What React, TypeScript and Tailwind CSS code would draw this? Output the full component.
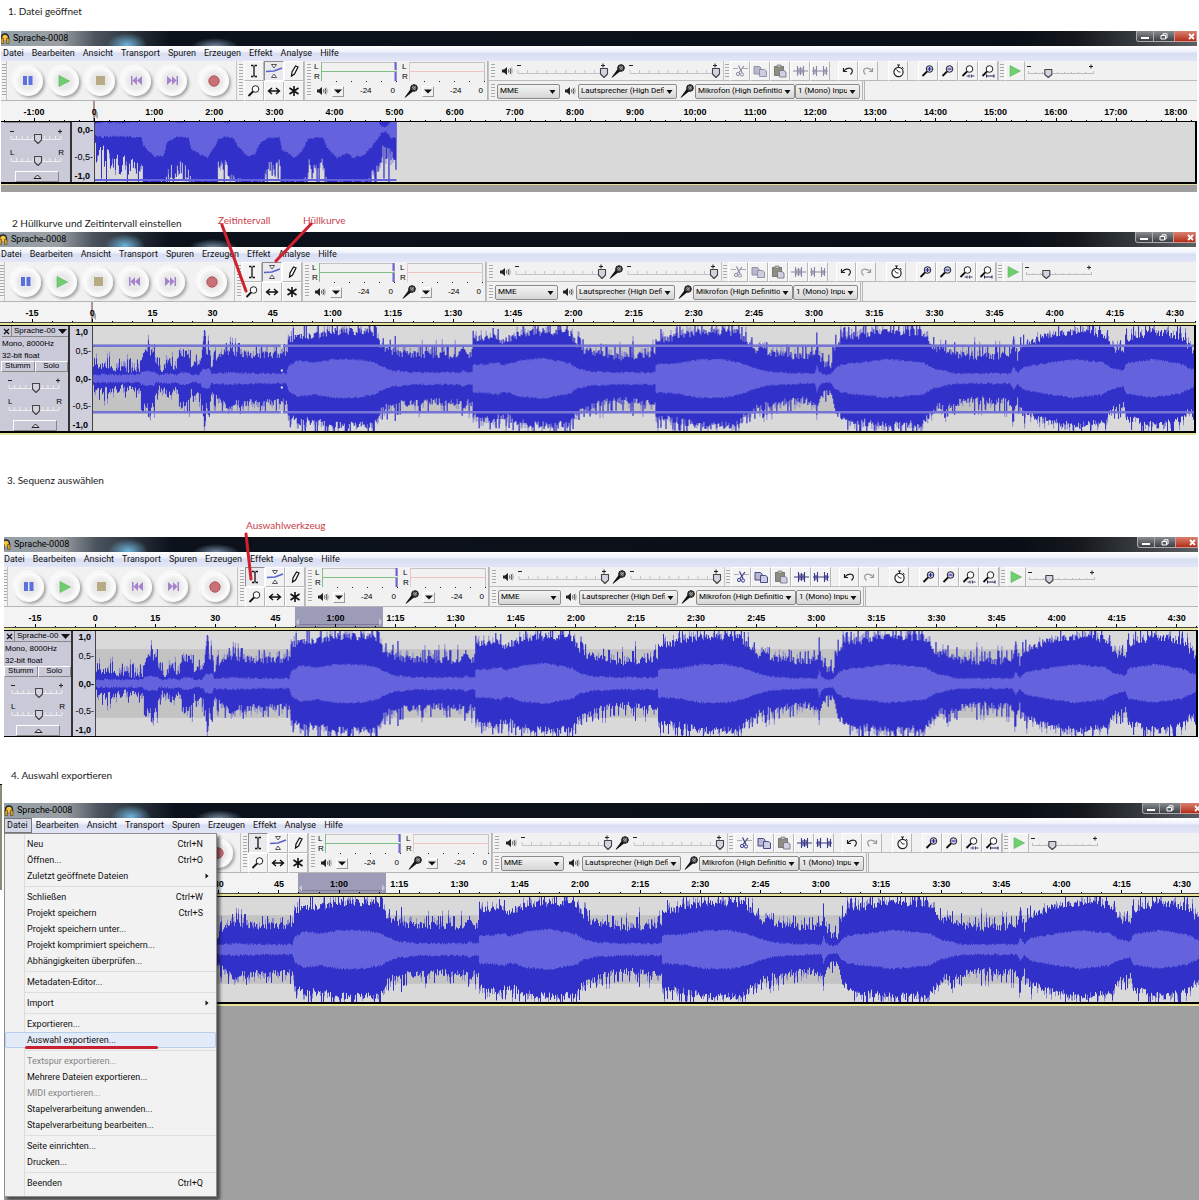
import { useState } from 'react';
import type { ReactNode } from 'react';
import clsx from 'clsx';

const MENUS = ['Datei', 'Bearbeiten', 'Ansicht', 'Transport', 'Spuren', 'Erzeugen', 'Effekt', 'Analyse', 'Hilfe'];

const MINUTES = ['-1:00', '0', '1:00', '2:00', '3:00', '4:00', '5:00', '6:00', '7:00', '8:00', '9:00', '10:00', '11:00', '12:00', '13:00', '14:00', '15:00', '16:00', '17:00', '18:00'];
const SECONDS = ['-15', '0', '15', '30', '45', '1:00', '1:15', '1:30', '1:45', '2:00', '2:15', '2:30', '2:45', '3:00', '3:15', '3:30', '3:45', '4:00', '4:15', '4:30'];

type MenuEntry = { label: string; keys?: string; sub?: boolean; off?: boolean; active?: boolean };

const FILE_MENU: MenuEntry[][] = [
  [{ label: 'Neu', keys: 'Ctrl+N' }, { label: 'Öffnen...', keys: 'Ctrl+O' }, { label: 'Zuletzt geöffnete Dateien', sub: true }],
  [
    { label: 'Schließen', keys: 'Ctrl+W' },
    { label: 'Projekt speichern', keys: 'Ctrl+S' },
    { label: 'Projekt speichern unter...' },
    { label: 'Projekt komprimiert speichern...' },
    { label: 'Abhängigkeiten überprüfen...' },
  ],
  [{ label: 'Metadaten-Editor...' }],
  [{ label: 'Import', sub: true }],
  [{ label: 'Exportieren...' }, { label: 'Auswahl exportieren...', active: true }],
  [
    { label: 'Textspur exportieren...', off: true },
    { label: 'Mehrere Dateien exportieren...' },
    { label: 'MIDI exportieren...', off: true },
    { label: 'Stapelverarbeitung anwenden...' },
    { label: 'Stapelverarbeitung bearbeiten...' },
  ],
  [{ label: 'Seite einrichten...' }, { label: 'Drucken...' }],
  [{ label: 'Beenden', keys: 'Ctrl+Q' }],
];

// x, peak, rms: amplitudes in units of half the track height (52)
type Point = [number, number, number];

const DETAIL: Point[] = [
  [0, 8, 4], [10, 11, 4], [30, 8, 4], [46, 8, 4], [48, 20, 6], [54, 26, 7], [61, 24, 7], [63, 10, 4], [70, 8, 4], [75, 17, 5], [80, 8, 4],
  [84, 8, 4], [86, 25, 6], [96, 22, 6], [98, 12, 4], [106, 12, 4], [109, 26, 9], [116, 26, 10], [118, 11, 5], [124, 20, 5], [134, 25, 6], [160, 22, 5],
  [193, 22, 5], [195, 40, 12], [204, 45, 18], [220, 45, 16], [240, 49, 19], [262, 49, 19], [281, 48, 16], [288, 34, 12], [300, 25, 8], [320, 22, 6],
  [367, 22, 6], [370, 28, 8], [374, 22, 6], [379, 24, 6], [380, 40, 14], [392, 44, 14], [405, 42, 16], [410, 39, 13], [427, 47, 18], [450, 49, 20],
  [477, 48, 15], [484, 35, 10], [500, 25, 7], [520, 20, 6], [562, 22, 6], [563, 41, 14], [584, 44, 15], [607, 49, 19], [630, 49, 19], [646, 48, 16],
  [654, 37, 13], [674, 25, 7], [707, 20, 5], [722, 22, 5], [724, 38, 13], [727, 18, 6], [732, 12, 4], [738, 12, 4], [743, 36, 11], [750, 43, 14],
  [793, 49, 19], [830, 48, 16], [840, 34, 10], [863, 22, 5], [890, 20, 5], [918, 22, 5], [921, 43, 12], [925, 20, 5], [930, 36, 11], [953, 44, 15],
  [980, 49, 19], [1010, 47, 16], [1020, 34, 10], [1031, 24, 8], [1034, 42, 15], [1060, 49, 19], [1087, 45, 15], [1102, 28, 8],
];

const DETAIL_SPIKES: Record<number, number> = { 14: 20, 55: 38, 56: 34, 61: 34, 111: 48, 112: 42, 115: 36, 183: 32, 191: 34, 302: 42, 540: 37, 552: 30, 853: 38, 862: 36, 882: 36 };

const OVERVIEW: Point[] = [
  [0, 20, 6], [8, 20, 8], [10, 30, 7], [28, 38, 7], [46, 36, 8], [48, 58, 16], [59, 62, 27], [68, 62, 26], [72, 52, 12], [82, 40, 7], [93, 44, 8],
  [96, 60, 20], [112, 62, 28], [119, 62, 18], [123, 44, 9], [132, 38, 7], [139, 44, 9], [142, 60, 16], [152, 62, 26], [159, 62, 25], [165, 54, 14],
  [173, 42, 8], [184, 40, 8], [187, 60, 20], [200, 62, 28], [208, 60, 20], [213, 42, 9], [228, 40, 8], [232, 60, 18], [242, 62, 28], [252, 62, 23],
  [258, 62, 28], [269, 60, 25], [276, 48, 18], [282, 44, 10], [287, 22, 3], [291, 18, 2], [296, 30, 9], [302, 36, 8],
];

function noise(n: number) {
  const s = Math.sin(n * 127.1 + 11.7) * 43758.5453;
  return s - Math.floor(s);
}

function sample(points: Point[], x: number, key: 1 | 2) {
  const i = points.findIndex((p) => p[0] > x);
  if (i < 0) return points[points.length - 1][key];
  const a = points[i - 1];
  const b = points[i];
  return a[key] + ((b[key] - a[key]) * (x - a[0])) / (b[0] - a[0]);
}

function stepPath(top: number[], bottom: number[], mid: number) {
  const upper = top.map((v, x) => `V${(mid - v).toFixed(1)}H${x + 1}`).join('');
  const lower = bottom.map((v, x) => `V${(mid + v).toFixed(1)}H${x}`).reverse().join('');
  return `M0 ${mid}${upper}${lower}Z`;
}

function buildWave(points: Point[], spikes: Record<number, number>, rough: number) {
  const last = points[points.length - 1][0];
  const xs = Array.from({ length: last }, (_, x) => x);
  const peak = (seed: number) =>
    xs.map((x) => {
      const base = sample(points, x, 1);
      const jump = noise(x * 3 + seed);
      const lift = base < 30 ? 1 : -3;
      const v = base + lift + (jump - 0.4) * rough + (jump > 0.88 ? rough * 0.6 : 0);
      return Math.min(52, Math.max(spikes[x] ?? 0, v, 4));
    });
  const rms = (seed: number) => xs.map((x) => Math.max(1, sample(points, x, 2) + (noise(x + seed) - 0.5) * 2));
  const top = peak(1);
  const bottom = peak(700);
  const haze = (vals: number[], seed: number) => vals.map((v, x) => (noise(x * 7 + seed) > 0.7 ? Math.min(52, v + 5) : v));
  return {
    haze: stepPath(haze(top, 5), haze(bottom, 90), 52),
    peak: stepPath(top, bottom, 52),
    rms: stepPath(rms(40), rms(240), 52),
  };
}

const WAVES = {
  detail: buildWave(DETAIL, DETAIL_SPIKES, 9),
  overview: buildWave(OVERVIEW, {}, 24),
};

/* ---------- icons ---------- */

function Svg({ w, h, children, className }: { w: number; h: number; children: ReactNode; className?: string }) {
  return (
    <svg width={w} height={h} viewBox={`0 0 ${w} ${h}`} fill="none" className={clsx('shrink-0', className)} aria-hidden="true">
      {children}
    </svg>
  );
}

const Speaker = () => (
  <Svg w={12} h={10}>
    <path d="M1 3.5h2L6 1v8L3 6.5H1z" fill="#222" />
    <path d="M7.5 3.5q1 1.500 0 3M9 2.200q2 2.800 0 5.600" stroke="#333" strokeWidth="0.900" />
    <path d="M10.500 1.500q1.600 3.500 0 7" stroke="#999" strokeWidth="0.800" />
  </Svg>
);

const Mic = () => (
  <Svg w={14} h={14}>
    <path d="M0.500 13.500L7 4.500L9.500 7L1.500 13.500z" fill="#111" />
    <circle cx="10" cy="4" r="3.300" fill="#444" stroke="#111" />
    <path d="M8 3l3.500 3M9 5.500l2.800-3.500M8.500 2l3.500 2.500" stroke="#ccc" strokeWidth="0.600" />
  </Svg>
);

const Magnifier = ({ kind }: { kind?: 'in' | 'out' | 'sel' | 'fit' }) => (
  <Svg w={14} h={14}>
    <circle cx="8.500" cy="5" r="3.300" stroke="#222" fill={kind === 'in' || kind === 'out' ? '#c8c8f0' : '#fff'} />
    <path d="M6 7.500L1.500 12" stroke="#111" strokeWidth="1.800" />
    {kind === 'in' && <path d="M8.500 3v4M6.500 5h4" stroke="#228" />}
    {kind === 'out' && <path d="M6.500 5h4" stroke="#228" />}
    {kind === 'sel' && <path d="M5.500 12h3m1 0h4M8 10.500v3M10.500 10.500v3" stroke="#447" />}
    {kind === 'fit' && <path d="M5.500 10.500v3M5.500 12h7.500M13 10.500v3" stroke="#225" />}
  </Svg>
);

const IBeam = () => <Svg w={12} h={14}><path d="M3 1.500h2.500M6.500 1.500H9M3 12.500h2.500M6.500 12.500H9M6 2v10" stroke="#111" strokeWidth="1.300" /></Svg>;
const Envelope = () => (
  <Svg w={18} h={16}>
    <path d="M6.500 1.500h5L9 5zM6.500 14.500h5L9 11z" stroke="#444" strokeWidth="0.900" fill="#fff" />
    <path d="M1 8.500l8-0.500l8-3" stroke="#5a62d0" strokeWidth="1.700" />
  </Svg>
);
const Pencil = () => <Svg w={12} h={14}><path d="M3.500 12l0.500-4l3.500-6l2.500 1l-3.500 7z" stroke="#111" strokeWidth="1.200" fill="#fff" /><path d="M3.500 12.500l0.500-2l1 1z" fill="#111" /></Svg>;
const Shift = () => <Svg w={14} h={10}><path d="M2 5h10M5 2L1.500 5L5 8M9 2l3.500 3L9 8" stroke="#111" strokeWidth="1.400" /></Svg>;
const Multi = () => <Svg w={12} h={12}><path d="M6 1v10M1.500 3l9 6M10.500 3l-9 6" stroke="#111" strokeWidth="1.600" /></Svg>;

const Cut = ({ ink }: { ink: string }) => (
  <Svg w={15} h={14}>
    <path d="M0 4.500h5M10 4.500h5" stroke="#999" strokeWidth="0.800" />
    <path d="M5.500 1.500l3.500 7M11 2l-5 6.500" stroke={ink} strokeWidth="1.200" />
    <circle cx="5" cy="10" r="1.600" stroke={ink} /><circle cx="9" cy="10.500" r="1.600" stroke={ink} />
  </Svg>
);
const Copy = ({ ink }: { ink: string }) => (
  <Svg w={15} h={14}>
    <path d="M1 2.500h5.500l1.500 1.500v6h-7z" fill="#b9b9cc" stroke={ink} strokeWidth="0.900" />
    <path d="M6.500 5.500h5l2 1.500v5.500h-7z" fill="#cdcde0" stroke={ink} strokeWidth="0.900" />
  </Svg>
);
const Paste = () => (
  <Svg w={15} h={14}>
    <path d="M1.500 2.500h9v9h-9z" fill="#8d8d80" stroke="#777" />
    <path d="M4 1h4v2.500H4z" fill="#bbb" stroke="#777" strokeWidth="0.700" />
    <path d="M6.500 6.500h4.500l2 1.500v5h-6.500z" fill="#cfcfe2" stroke="#778" strokeWidth="0.900" />
  </Svg>
);
const Trim = ({ ink }: { ink: string }) => <Svg w={15} h={12}><path d="M0 6h15M4.500 1v10M6 3v6M7.500 2v8M9 3v6M10.500 1v10" stroke={ink} strokeWidth="1.100" /></Svg>;
const Silence = ({ ink }: { ink: string }) => <Svg w={16} h={12}><path d="M0 6h16M1.500 2v8M3 4v5M4.500 1v10M11.500 1v10M13 4v5M14.500 2v8" stroke={ink} strokeWidth="1.100" /></Svg>;
const Undo = ({ flip }: { flip?: boolean }) => (
  <Svg w={12} h={10} className={flip ? '-scale-x-100' : ''}>
    <path d="M1.500 2v3.500H5M1.800 5Q5 1 9 2.500Q12 5 8.500 8.500" stroke={flip ? '#999' : '#222'} strokeWidth="1.200" />
  </Svg>
);
const Clock = () => (
  <Svg w={13} h={14}>
    <circle cx="6.500" cy="8" r="4.600" stroke="#222" strokeWidth="1.200" fill="#fff" />
    <path d="M5 1h3M6.500 1v2.500M6.500 8L4.500 5.500M6.500 8h2M10 3l1.500 1.500" stroke="#222" />
  </Svg>
);
const PlayMark = ({ size }: { size: number }) => (
  <svg width={size} height={size} viewBox="0 0 12 12" aria-hidden="true"><path d="M1 0.500L11.500 6L1 11.500z" fill="#6fcf70" stroke="#56b558" strokeWidth="0.600" /></svg>
);
const Headphones = () => (
  <Svg w={10} h={11}>
    <path d="M1.500 7V5Q1.500 1 5 1T8.500 5v2" stroke="#223" strokeWidth="1.400" fill="#f6c33c" />
    <path d="M1 5.500h2.500v5H1zM6.500 5.500H9v5H6.500z" fill="#f09a1a" stroke="#442" strokeWidth="0.600" />
  </Svg>
);

/* ---------- controls ---------- */

function Slider({ label, start, marks, small }: { label: string; start: number; marks?: [string, string]; small?: boolean }) {
  const [value, setValue] = useState(start);
  const w = small ? 62 : 98;
  const x = 5 + ((w - 12) * value) / 100;
  const ticks = Array.from({ length: 10 }, (_, i) => 5 + ((w - 12) * i) / 9);
  return (
    <label className="relative block h-5 shrink-0 text-[8px] leading-none text-black">
      <svg width={w} height="20" viewBox={`0 0 ${w} 20`} aria-hidden="true">
        <path d={`M5 12.500H${w - 7}`} stroke={small ? '#eee' : '#c4c4c4'} />
        <path d={ticks.map((t) => `M${t} 9v3`).join('')} stroke={small ? '#eee' : '#c4c4c4'} />
        {!marks && <path d={`M4 4.500h4M${w - 10} 4.500h4M${w - 8} 2.500v4`} stroke="#222" />}
        <path d={`M${x - 3.5} 7.500h7v5.500l-3.500 3.500l-3.500-3.500z`} fill="#d4d4e0" stroke="#444" strokeWidth="1.100" strokeLinejoin="round" />
      </svg>
      {marks && (
        <span className="absolute inset-x-0 top-0 flex justify-between px-1">
          <span>{marks[0]}</span>
          <span>{marks[1]}</span>
        </span>
      )}
      <input
        type="range"
        aria-label={label}
        value={value}
        onChange={(e) => setValue(Number(e.target.value))}
        className="absolute inset-0 m-0 h-full w-full cursor-pointer opacity-0"
      />
    </label>
  );
}

function TempoSlider() {
  const [tempo, setTempo] = useState(27);
  const x = 6 + (66 * tempo) / 100;
  return (
    <label className="relative block h-5">
      <svg width="76" height="20" viewBox="0 0 76 20" aria-hidden="true">
        <path d="M3 12.500h66M3.500 10v3M10.500 11v2M17.500 11v2M32.500 11v2M39.500 11v2M46.500 11v2M53.500 11v2M60.500 11v2M68.500 10v3" stroke="#bdbdbd" />
        <path d="M2 5.500h4M64 5.500h4M66 3.500v4" stroke="#222" />
        <path d={`M${x - 4} 8.500h7v5l-3.500 3l-3.500-3z`} fill="#d4d4e0" stroke="#444" strokeWidth="1.100" strokeLinejoin="round" />
      </svg>
      <input
        type="range"
        aria-label="Tempo"
        value={tempo}
        onChange={(e) => setTempo(Number(e.target.value))}
        className="absolute inset-0 m-0 h-full w-full opacity-0"
      />
    </label>
  );
}

function Grip({ className }: { className?: string }) {
  return (
    <div className={clsx('flex shrink-0 justify-center border-l border-[#c4c4c4] py-[3px]', className)}>
      <div className="w-1 bg-[repeating-linear-gradient(to_bottom,#a8a8a8_0px,#a8a8a8_1px,#f4f4f4_1px,#f4f4f4_3px)]" />
    </div>
  );
}

function IconButton({ label, children, pressed }: { label: string; children: ReactNode; pressed?: boolean }) {
  return (
    <button
      type="button"
      aria-label={label}
      className={clsx(
        'flex h-5 w-5 shrink-0 items-center justify-center border',
        pressed ? 'border-[#8c8c8c] border-r-white border-b-white bg-[#e9e9ee]' : 'border-white border-r-[#b8b8b8] border-b-[#b8b8b8] bg-[#f3f3f3]',
      )}
    >
      {children}
    </button>
  );
}

function RoundButton({ label, children, className }: { label: string; children: ReactNode; className?: string }) {
  return (
    <button
      type="button"
      aria-label={label}
      className={clsx(
        'flex h-[30px] w-[30px] shrink-0 items-center justify-center rounded-full bg-[radial-gradient(circle,#e9e9e9_35%,#fbfbfb_60%,#ececec_100%)] shadow-[2px_2px_3px_#a6a6a6,-1px_-1px_2px_#ffffff]',
        className,
      )}
    >
      {children}
    </button>
  );
}

function Select({ label, text, className }: { label: string; text: string; className: string }) {
  return (
    <div className={clsx('relative h-[15px] shrink-0', className)}>
      <select
        aria-label={label}
        className="block h-full w-full appearance-none overflow-hidden rounded-[2px] border border-[#8a8a8a] bg-linear-to-b from-[#f4f4f4] to-[#d6d6d6] pr-3 pl-[2px] text-[8px] leading-[12px] text-black"
      >
        <option>{text}</option>
      </select>
      <svg width="7" height="4" viewBox="0 0 7 4" className="pointer-events-none absolute top-[6px] right-1" aria-hidden="true">
        <path d="M0.500 0h6L3.500 4z" fill="#111" />
      </svg>
    </div>
  );
}

function Meter({ tone, children, live }: { tone: string; children: ReactNode; live?: boolean }) {
  return (
    <div className="flex w-[86px] shrink-0 flex-col">
      <div className="flex h-[21px]">
        <div className="flex w-2 flex-col justify-around pl-px font-['Liberation_Sans',sans-serif] text-[8px] leading-[9px]">
          <span>L</span>
          <span>R</span>
        </div>
        <svg viewBox="0 0 76 21" className="h-[21px] w-[76px]" aria-hidden="true">
          <path d="M0.500 20V1.500H75.500V20M0.500 10.500h75" fill="none" stroke="#c2c2c2" />
          <path d="M0.500 1v19M0.500 10.500h75" stroke={tone} />
          {live && <path d="M74.500 1v8M74.500 11v9" stroke="#6a62d6" strokeWidth="2" />}
          <path d="M15.500 20v1M30.500 20v1M45.500 20v1M60.500 20v1M75.500 20v1" stroke="#222" />
        </svg>
      </div>
      <div className="flex h-[19px] items-center pl-[3px] font-['Liberation_Sans',sans-serif] text-[8px] leading-none">
        {children}
        <button type="button" aria-label="Pegel-Optionen" className="ml-1 flex h-[11px] w-3 items-center justify-center border border-white border-r-[#999] border-b-[#999]">
          <Svg w={8} h={5}><path d="M0 0.500h8L4 4.500z" fill="#111" /></Svg>
        </button>
        <span className="ml-4">-24</span>
        <span className="ml-auto pr-1">0</span>
      </div>
    </div>
  );
}

function Toolbars({ editing, tool }: { editing: boolean; tool: 'select' | 'envelope' }) {
  const ink = editing ? '#3a3a8a' : '#8a8aa6';
  return (
    <div className="flex h-10 border-b border-[#b5b5b5] bg-[#f1f1f1]">
      <Grip className="w-[7px] border-r" />
      <div className="flex w-[229px] shrink-0 items-center gap-[6px] pl-[6px]">
        <RoundButton label="Pause"><Svg w={10} h={9}><path d="M0 0h4v9H0zM5.500 0h4v9h-4z" fill="#5b6fe0" /></Svg></RoundButton>
        <RoundButton label="Wiedergabe"><PlayMark size={12} /></RoundButton>
        <RoundButton label="Stopp"><Svg w={9} h={9}><path d="M0 0h9v9H0z" fill="#b9aa86" /></Svg></RoundButton>
        <RoundButton label="Zum Anfang"><Svg w={11} h={9}><path d="M0 0h1.500v9H0zM6 0v9L1.500 4.500zM11 0v9L6 4.500z" fill="#a583cc" /></Svg></RoundButton>
        <RoundButton label="Zum Ende"><Svg w={11} h={9}><path d="M9.500 0H11v9H9.500zM5 0v9l4.500-4.500zM0 0v9l5-4.500z" fill="#a583cc" /></Svg></RoundButton>
        <RoundButton label="Aufnahme" className="ml-[6px]"><Svg w={12} h={12}><circle cx="6" cy="6" r="5.200" fill="#c87074" stroke="#b05a60" /></Svg></RoundButton>
      </div>
      <Grip className="w-2" />
      <div className="grid w-[60px] shrink-0 grid-cols-3">
        <IconButton label="Auswahlwerkzeug" pressed={tool === 'select'}><IBeam /></IconButton>
        <IconButton label="Hüllkurvenwerkzeug" pressed={tool === 'envelope'}><Envelope /></IconButton>
        <IconButton label="Zeichenwerkzeug"><Pencil /></IconButton>
        <IconButton label="Zoomwerkzeug"><Magnifier /></IconButton>
        <IconButton label="Verschiebewerkzeug"><Shift /></IconButton>
        <IconButton label="Multifunktionswerkzeug"><Multi /></IconButton>
      </div>
      <Grip className="w-[9px]" />
      <Meter tone="#7fbf86" live><Speaker /></Meter>
      <div className="w-[2px] shrink-0" />
      <Meter tone="#efc4c4"><Mic /></Meter>
      <div className="min-w-0 flex-1 border-l border-[#b5b5b5]">
        <div className="flex h-5 items-center border-b border-[#bcbcbc]">
          <Grip className="mr-[5px] w-2 self-stretch" />
          <Speaker />
          <Slider label="Ausgabelautstärke" start={100} />
          <Mic />
          <Slider label="Eingabelautstärke" start={100} />
          <Grip className="w-[7px] self-stretch" />
          <IconButton label="Ausschneiden"><Cut ink={ink} /></IconButton>
          <IconButton label="Kopieren"><Copy ink={ink} /></IconButton>
          <IconButton label="Einfügen"><Paste /></IconButton>
          <IconButton label="Zuschneiden"><Trim ink={ink} /></IconButton>
          <IconButton label="Stille"><Silence ink={ink} /></IconButton>
          <div className="ml-2 flex">
            <IconButton label="Rückgängig"><Undo /></IconButton>
            <IconButton label="Wiederholen"><Undo flip /></IconButton>
          </div>
          <div className="mx-[10px] flex"><IconButton label="Sync"><Clock /></IconButton></div>
          <IconButton label="Vergrößern"><Magnifier kind="in" /></IconButton>
          <IconButton label="Verkleinern"><Magnifier kind="out" /></IconButton>
          <IconButton label="Auswahl einpassen"><Magnifier kind="sel" /></IconButton>
          <IconButton label="Projekt einpassen"><Magnifier kind="fit" /></IconButton>
          <Grip className="w-[7px] self-stretch" />
          <IconButton label="Mit Tempo abspielen"><PlayMark size={12} /></IconButton>
          <TempoSlider />
        </div>
        <div className="flex h-5 items-center">
          <Grip className="mr-px w-2 self-stretch" />
          <Select label="Audio-Host" text="MME" className="mr-1 w-[63px]" />
          <Speaker />
          <Select label="Ausgabegerät" text="Lautsprecher (High Defi" className="mr-[3px] ml-[2px] w-[99px]" />
          <Mic />
          <Select label="Eingabegerät" text="Mikrofon (High Definition" className="ml-px w-[100px]" />
          <Select label="Kanäle" text="1 (Mono) Inpu" className="w-[65px]" />
          <div className="ml-[2px] w-[3px] self-stretch border-x border-[#b5b5b5]" />
        </div>
      </div>
    </div>
  );
}

function Ruler({ labels, quarters, cursor, selection }: { labels: string[]; quarters?: boolean; cursor?: boolean; selection?: boolean }) {
  return (
    <div className="relative h-5 bg-[#f3f3f3]">
      {selection && (
        <div className="absolute inset-y-0 left-[294px] flex w-[88px] items-end justify-between bg-[#9c9cb8] px-px pb-px">
          <Svg w={86} h={8}><path d="M3 0.500v7L0 4zM83 0.500v7l3-3.500z" fill="#c8c8d0" /><path d="M3 6.500h80" stroke="#7c7c98" /></Svg>
        </div>
      )}
      {cursor && (
        <Svg w={6} h={20} className="absolute top-0 left-[93px]">
          <path d="M1 0v20" stroke="#633" />
          <path d="M5 11v7L1.500 14.500z" fill="#aaa" />
        </Svg>
      )}
      <div className="relative -mr-[9px] ml-1 flex h-full">
        {labels.map((l) => (
          <div key={l} className="flex flex-1 flex-col justify-between">
            <span className="pt-[6px] text-center font-['Liberation_Sans',sans-serif] text-[9px] leading-[10px] font-bold text-black">{l}</span>
            {quarters ? (
              <div className="grid h-[3px] grid-cols-4 items-end">
                <i className="h-px w-px bg-black" />
                <i className="h-px w-px bg-black" />
                <i className="h-[3px] w-px bg-black" />
                <i className="h-px w-px bg-black" />
              </div>
            ) : (
              <div className="grid h-[3px] grid-cols-3 items-end justify-items-center">
                <i className="h-px w-px bg-black" />
                <i className="h-[3px] w-px bg-black" />
                <i className="h-px w-px bg-black" />
              </div>
            )}
          </div>
        ))}
      </div>
    </div>
  );
}

function Track({ wave, envelope, band }: { wave: 'detail' | 'overview'; envelope?: boolean; band?: boolean }) {
  const shape = WAVES[wave];
  return (
    <div className="flex h-[105px] shrink-0">
      <div className="flex w-[72px] shrink-0 flex-col border-r-2 border-[#333] bg-[#c9c9d8] pl-1 font-['Liberation_Sans',sans-serif] text-[8px] text-black">
        <div className="flex h-3 items-center border-b border-[#888]">
          <button type="button" aria-label="Spur schließen" className="flex h-full w-[10px] items-center justify-center border-r border-[#888]">
            <Svg w={7} h={7}><path d="M1 1l5 5M6 1L1 6" stroke="#111" strokeWidth="1.300" /></Svg>
          </button>
          <button type="button" className="flex flex-1 items-center justify-between pr-px pl-[2px] leading-none">
            Sprache-00
            <Svg w={9} h={5}><path d="M0 0h9L4.500 5z" fill="#111" /></Svg>
          </button>
        </div>
        <p className="pt-px leading-[12px]">Mono, 8000Hz</p>
        <p className="leading-[11px]">32-bit float</p>
        <div className="-ml-px grid h-3 grid-cols-2">
          <button type="button" className="border border-white border-r-[#888] border-b-[#888] leading-none">Stumm</button>
          <button type="button" className="border border-white border-r-[#888] border-b-[#888] leading-none">Solo</button>
        </div>
        <div className="flex flex-col items-center gap-[2px] pt-1">
          <Slider label="Verstärkung" start={54} small />
          <Slider label="Balance" start={54} small marks={['L', 'R']} />
        </div>
        <button type="button" aria-label="Spur einklappen" className="mx-auto mt-[2px] flex h-3 w-11 items-center justify-center border border-white border-r-[#888] border-b-[#888]">
          <Svg w={9} h={5}><path d="M1 4.500L4.500 1L8 4.500z" stroke="#222" fill="#ddd" /></Svg>
        </button>
      </div>
      <div className="flex w-[23px] shrink-0 flex-col justify-between border-r border-[#444] bg-[#cfcfde] text-right font-['Liberation_Sans',sans-serif] text-[9px] leading-[12px] text-black">
        <b className="pr-1">1,0</b>
        <span className="-mt-2 pr-px">0,5-</span>
        <b className="pr-px">0,0-</b>
        <span className="-mb-2 pr-px">-0,5-</span>
        <b className="pr-1">-1,0</b>
      </div>
      <svg viewBox="0 0 1102 104" preserveAspectRatio="none" className="h-full min-w-0 flex-1 border-r-2 border-black bg-[#d9d9d9]" aria-hidden="true">
        {band && <rect y="18" width="1102" height="68" fill="#c3c3c3" />}
        <path d={shape.haze} fill="#8a88cf" />
        <path d={shape.peak} fill="#3130c8" />
        <path d={shape.rms} fill="#6463dd" />
        {wave === 'overview' && <path d="M0 102h302" stroke="#6463dd" strokeWidth="2" />}
        {envelope && (
          <>
            <path d="M0 19.500h1102M0 85.500h1102" stroke="#7475d6" strokeWidth="2.500" />
            <path d="M188 18.500h2v2h-2zM188 43h2v2h-2zM188 60h2v2h-2zM188 84.500h2v2h-2z" fill="#eee" />
          </>
        )}
      </svg>
    </div>
  );
}

function FileMenu() {
  return (
    <div
      role="menu"
      className="absolute top-[30px] left-0 z-10 w-[213px] border border-[#8f8f8f] bg-[linear-gradient(to_right,#f1f1f1_19px,#dcdcdc_19px,#dcdcdc_20px,#f2f2f2_20px)] pt-[2px] pb-[5px] shadow-[3px_3px_3px_rgba(0,0,0,0.55)]"
    >
      {FILE_MENU.map((group, i) => (
        <div key={group[0].label} className={clsx(i > 0 && 'mt-[2px] ml-5 border-t border-[#dedede] pt-[2px]')}>
          {group.map((item) => (
            <button
              key={item.label}
              type="button"
              role="menuitem"
              disabled={item.off}
              className={clsx(
                'relative flex h-4 items-center justify-between pr-[13px] text-left text-[9px] leading-none',
                i > 0 ? '-ml-5 w-[211px] pl-[22px]' : 'w-full pl-[22px]',
                item.off ? 'text-[#858585]' : 'text-[#111]',
                item.active && 'rounded-[2px] bg-[#e4ebf8] ring-1 ring-[#b5cfec] ring-inset',
              )}
            >
              {item.label}
              {item.keys && <span>{item.keys}</span>}
              {item.sub && <Svg w={4} h={6} className="-mr-[6px]"><path d="M0.500 0.500L3.500 3L0.500 5.500z" fill="#111" /></Svg>}
              {item.active && <i className="absolute -bottom-px left-5 h-[3px] w-[133px] rounded-full bg-[#c9202f]" />}
            </button>
          ))}
        </div>
      ))}
    </div>
  );
}

type WindowProps = {
  className: string;
  inset: string;
  tool: 'select' | 'envelope';
  editing?: boolean;
  menuOpen?: boolean;
  children: ReactNode;
};

function AudioWindow({ className, inset, tool, editing = false, menuOpen, children }: WindowProps) {
  return (
    <section className={clsx('relative', menuOpen ? 'flex flex-col' : 'overflow-hidden', className)}>
      <div className={clsx('flex flex-1 flex-col', inset)}>
        <header className="flex h-[15px] items-start bg-[radial-gradient(ellipse_20px_12px_at_127px_14px,#6fb4dc,transparent),radial-gradient(ellipse_24px_9px_at_215px_16px,#7e93ad,transparent),linear-gradient(to_right,#93a0a8_0px,#9a9fa3_60px,#4b545e_95px,#0c121b_170px,#0a0f17_85%,#14181d_90%,#5b6064_100%)]">
          <h2 className="flex h-full items-center gap-[3px] pb-px text-[9px] leading-none text-black">
            <Headphones />
            Sprache-0008
          </h2>
          <div className="ml-auto flex h-[11px]">
            <button type="button" aria-label="Minimieren" className="flex w-[18px] items-center justify-center rounded-bl-[3px] border border-t-0 border-[#aaa] bg-linear-to-b from-[#8a8d90] to-[#3c4045]">
              <i className="mt-1 h-[2px] w-2 bg-white" />
            </button>
            <button type="button" aria-label="Wiederherstellen" className="flex w-5 items-center justify-center border-b border-[#aaa] bg-linear-to-b from-[#8a8d90] to-[#3c4045]">
              <Svg w={8} h={7}><path d="M1 2.500h4.500V6H1zM3 2V0.800h4V5H6" stroke="#fff" /></Svg>
            </button>
            <button type="button" aria-label="Schließen" className="flex w-[23px] items-center justify-end border border-t-0 border-[#c99] bg-linear-to-b from-[#d9806f] to-[#b32a15] pr-px">
              <Svg w={7} h={7}><path d="M1 1l5 5M6 1L1 6" stroke="#fff" strokeWidth="1.800" /></Svg>
            </button>
          </div>
        </header>
        <nav className="flex h-[15px] items-center bg-[linear-gradient(to_bottom,#ffffff,#f0f2fb_35%,#d9def2_50%,#e2e6f7)] text-[9px] leading-none text-[#111]">
          {MENUS.map((m, i) => (
            <button
              key={m}
              type="button"
              className={clsx('h-full pr-[4px] pb-px', i === 0 ? 'pl-[3px]' : 'pl-[4px]', i === 0 && menuOpen && 'bg-[#d3d6e4] ring-1 ring-[#777] ring-inset')}
            >
              {m}
            </button>
          ))}
        </nav>
        <Toolbars editing={editing} tool={tool} />
        {children}
      </div>
      {menuOpen && <FileMenu />}
    </section>
  );
}

function Caption({ className, children }: { className: string; children: ReactNode }) {
  return <p className={clsx("font-['Lato',sans-serif] text-[10px] leading-4 text-[#222]", className)}>{children}</p>;
}

function Note({ className, children }: { className: string; children: ReactNode }) {
  return <span className={clsx("absolute font-['Lato',sans-serif] text-[10px] leading-3 text-[#c8404a]", className)}>{children}</span>;
}

export default function App() {
  return (
    <main className="relative flex min-h-screen flex-col overflow-hidden bg-white font-['Roboto',sans-serif]">
      <Caption className="pt-[3px] pb-3 pl-2">1. Datei geöffnet</Caption>
      <AudioWindow className="mr-[2px] ml-px" inset="-ml-px" tool="envelope">
        <Ruler labels={MINUTES} quarters cursor />
        <div className="flex h-[63px] flex-col justify-end overflow-hidden border-t border-b-2 border-black">
          <Track wave="overview" />
        </div>
        <div className="h-2 border-t border-[#e3dfa0] bg-[#a0a0a0]" />
      </AudioWindow>

      <div className="relative">
        <Caption className="pt-[23px] pb-px pl-3">2 Hüllkurve und Zeitintervall einstellen</Caption>
        <AudioWindow className="mr-[3px]" inset="-ml-[2px]" tool="envelope">
          <Ruler labels={SECONDS} cursor />
          <div className="border-t border-[#444] bg-[#e8e59a] py-[2px]">
            <div className="border-t border-b-2 border-black">
              <Track wave="detail" band envelope />
            </div>
          </div>
        </AudioWindow>
        <Note className="top-[22px] left-[218px]">Zeitintervall</Note>
        <Note className="top-[22px] left-[303px]">Hüllkurve</Note>
        <svg width="100" height="72" viewBox="0 0 100 72" className="absolute top-[30px] left-[218px]" aria-hidden="true">
          <path d="M4 3L28 69M93 2L58 39" stroke="#d0212f" strokeWidth="3" strokeLinecap="round" />
        </svg>
      </div>

      <div className="relative">
        <Caption className="pt-[37px] pb-[49px] pl-[7px]">3. Sequenz auswählen</Caption>
        <AudioWindow className="mr-px ml-1" inset="-ml-[3px]" tool="select" editing>
          <Ruler labels={SECONDS} selection />
          <div className="border-t border-[#444] bg-[#e8e59a] pt-[2px]">
            <div className="border-t border-b border-black">
              <Track wave="detail" band />
            </div>
          </div>
        </AudioWindow>
        <Note className="top-[84px] left-[246px]">Auswahlwerkzeug</Note>
        <svg width="12" height="52" viewBox="0 0 12 52" className="absolute top-[96px] left-[243px]" aria-hidden="true">
          <path d="M3 3L8 48" stroke="#d0212f" strokeWidth="3" strokeLinecap="round" />
        </svg>
      </div>

      <Caption className="pt-[30px] pb-5 pl-[11px]">4. Auswahl exportieren</Caption>
      <AudioWindow className="-mr-1 ml-1 flex-1" inset="" tool="select" editing menuOpen>
        <Ruler labels={SECONDS} selection />
        <div className="border-t border-[#444] bg-[#e8e59a] py-[2px]">
          <div className="border-t border-b-2 border-black">
            <Track wave="detail" band />
          </div>
        </div>
        <div className="flex-1 bg-[#a0a0a0]" />
      </AudioWindow>
      <i className="absolute top-[784px] left-0 h-[106px] w-[2px] border-t border-black bg-[#8c8c74]" />
    </main>
  );
}
